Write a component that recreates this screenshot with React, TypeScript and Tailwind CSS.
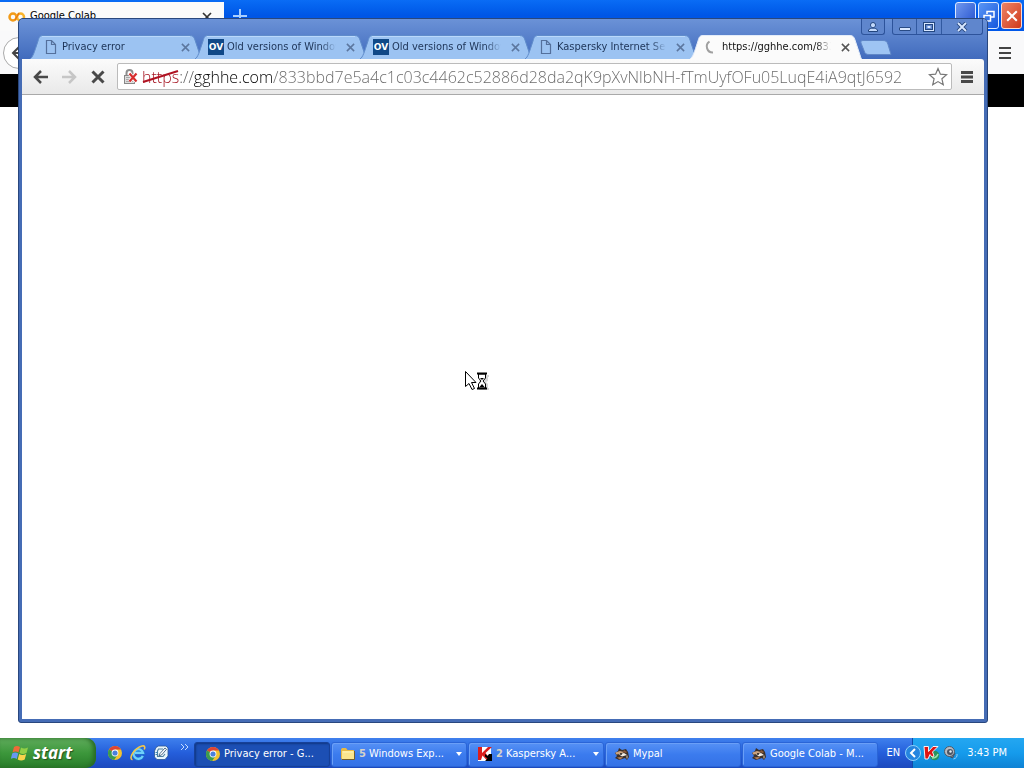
import React from "react";
import type { ReactNode } from "react";

const URL_TEXT =
  "https://gghhe.com/833bbd7e5a4c1c03c4462c52886d28da2qK9pXvNlbNH-fTmUyfOFu05LuqE4iA9qtJ6592";

function ChromeIcon() {
  return (
    <svg viewBox="0 0 16 16" className="size-4 shrink-0" aria-hidden="true">
      <circle cx="8" cy="8" r="7" fill="#f2c230" />
      <path d="M8 8 2 4.4A7 7 0 0 1 14.1 4.6L8 4.6Z" fill="#dd4436" />
      <path d="M8 8 2 4.4A7 7 0 0 0 7.2 15L10.6 9.8Z" fill="#3b9b50" />
      <circle cx="8" cy="8" r="3.4" fill="#fff" />
      <circle cx="8" cy="8" r="2.6" fill="#4a80dc" />
    </svg>
  );
}

function IeIcon() {
  return (
    <svg viewBox="0 0 16 16" className="size-4 shrink-0" aria-hidden="true">
      <path d="M12.8 10.8A4.8 4.8 0 1 1 13 7.8H5" fill="none" stroke="#1e7fd0" strokeWidth="3.4" />
      <path d="M12.8 10.8A4.8 4.8 0 1 1 13 7.8H5" fill="none" stroke="#6fd0fb" strokeWidth="2.2" />
      <path d="M2.5 14.8C-2 13.500 4.5 3 12 1c3-.8 3.200 1.500 2.200 3.500" fill="none" stroke="#f3c64a" strokeWidth="1.6" />
    </svg>
  );
}

function DesktopIcon() {
  return (
    <svg viewBox="0 0 16 16" className="size-4 shrink-0" aria-hidden="true">
      <path d="M3 2.5 5.500 1H13l2 2v8l-3 3.500H4L1.500 12V6Z" fill="#e9f5fb" stroke="#2c5793" strokeWidth=".8" />
      <path d="M10 4H5.500L4.500 6v5.500H10L12 9" fill="none" stroke="#4d7f9f" strokeWidth="1.1" />
      <path d="m6.500 9 5.500-6 1.500 1.300-5 5.700-2.500.7Z" fill="#fff" stroke="#294b6e" strokeWidth=".8" />
      <path d="M2.500 7.500h2M2.500 9.500h2" stroke="#3c87b7" />
    </svg>
  );
}

function FolderIcon() {
  return (
    <svg viewBox="0 0 16 16" className="size-4 shrink-0" aria-hidden="true">
      <path d="M1 3.5 2 2h4l1.5 2H14v10H2L1 12Z" fill="#e9ba45" />
      <path d="M2 5h12v8H2Z" fill="#fbe58d" />
      <path d="M2 13.5h12.5V5" fill="none" stroke="#75602d" />
      <path d="M3 6h10" stroke="#fff6bd" />
    </svg>
  );
}

function KasperskyIcon() {
  return (
    <svg viewBox="0 0 16 16" className="size-4 shrink-0" aria-hidden="true">
      <path d="M1 1h13v14H1Z" fill="#fff" />
      <path d="M1 1h4v6l6-6h4L8.500 7 14 14H9.500L5.500 9.500 4 14H1Z" fill="#dc1d1d" />
      <path d="m8 8 2.500 2L12 8h3v7H8l2.500-2.500L8 10.500Z" fill="#000" />
    </svg>
  );
}

function KasperskyTrayIcon() {
  return (
    <svg viewBox="0 0 18 16" className="h-4 w-[18px] shrink-0" aria-hidden="true">
      <circle cx="11.500" cy="10.500" r="4.800" fill="#279260" />
      <path d="M9 13c3 0 5-1 6-4" fill="none" stroke="#9be3a9" strokeWidth="1.500" />
      <path d="M1 1.500h4.500v5L10 1.500h5L9.500 7l1.500 4-2 1-2-2.500L5 14H2Z" fill="#e01414" stroke="#fff" strokeWidth=".9" />
    </svg>
  );
}

function MypalIcon() {
  return (
    <svg viewBox="0 0 16 16" className="size-4 shrink-0" aria-hidden="true">
      <path d="M1 7 4 5l1-3 3 2 4-1 2 3 1 5-2 3-2-2-3 1-3 1-4-2 2-2Z" fill="#3b302b" />
      <path d="M1.500 6.500 6 5l4 1-3 2-5 .5Z" fill="#caa27e" />
      <path d="m5 8.500 5-1.500 3 2-5 1.500Z" fill="#f2ebe2" />
      <path d="m10 4 3 2-1 1-3-1Z" fill="#8d5a39" />
      <path d="M3 11.500 7 11l2 .5-3 2Z" fill="#b27a51" />
      <path d="M13 9.500v3" stroke="#d9c8b5" />
      <circle cx="7" cy="8" r=".9" fill="#111" />
    </svg>
  );
}

function SpeakerIcon() {
  return (
    <svg viewBox="0 0 16 16" className="size-4 shrink-0" aria-hidden="true">
      <path d="m4 10 5.500 3L12 8" fill="#78808c" stroke="#424d60" />
      <circle cx="6.500" cy="6.500" r="5" fill="#b9bbc1" stroke="#4b5968" />
      <circle cx="7" cy="7" r="3" fill="#4b5565" />
      <circle cx="7.500" cy="6.500" r="1.2" fill="#e8eef4" />
      <path d="M10.500 14c2.500-.5 4-2.500 3.500-5" fill="none" stroke="#9ad3fa" />
    </svg>
  );
}

function WindowsFlag() {
  return (
    <svg viewBox="0 0 18 18" className="size-[18px] shrink-0" aria-hidden="true">
      <path d="M3 3c2-1.5 4-1.3 6 0L7.5 8.5c-2-1.2-4-1.2-6 0Z" fill="#ef6a38" />
      <path d="M10 3.5c2 1.2 4.5 1.2 7 0L15.5 9c-2.5 1.2-4.5 1.2-7 0Z" fill="#92cf47" />
      <path d="M1.2 9.5c2-1.3 4-1.2 6 0L5.8 15c-2-1.3-4-1.3-6 0Z" fill="#6798f2" />
      <path d="M8.2 10c2 1.2 4.5 1.2 7 0l-1.5 5.5c-2.5 1.2-4.5 1.2-7 0Z" fill="#f9d34c" />
    </svg>
  );
}

function PageIcon() {
  return (
    <svg viewBox="0 0 16 16" className="size-4 shrink-0" aria-hidden="true">
      <path d="M3.5 1.5h5l4 4v9h-9Zm5 0v4h4" fill="none" stroke="#54709c" strokeWidth="1.2" />
    </svg>
  );
}

function OvIcon() {
  return (
    <span className="flex size-4 shrink-0 items-center justify-center bg-[#104887] font-['DejaVu_Sans',sans-serif] text-[9px] leading-4 font-bold text-white">
      OV
    </span>
  );
}

function Spinner() {
  return (
    <svg viewBox="0 0 16 16" className="size-4 shrink-0" aria-hidden="true">
      <path d="M10 13.500A6 6 0 0 1 6.5 2.500" fill="none" stroke="#a0a0a0" strokeWidth="2" />
    </svg>
  );
}

function Cross({ className }: { className: string }) {
  return (
    <svg viewBox="0 0 10 10" className={className} aria-hidden="true">
      <path d="m1 1 8 8M9 1 1 9" fill="none" stroke="currentColor" strokeWidth="1.7" />
    </svg>
  );
}

function Tab({ title, icon, active = false }: { title: string; icon: ReactNode; active?: boolean }) {
  return (
    <div className={active ? "relative z-10 -mr-[7px] flex h-6 w-[172px] items-center pr-[11px] pl-[13px] text-[#111]" : "relative -mr-[7px] flex h-6 w-[172px] items-center pr-[11px] pl-[13px] text-[#1d3457]"}>
      <svg viewBox="0 0 172 24" className="absolute inset-0 size-full" preserveAspectRatio="none" aria-hidden="true">
        <path
          d="M0 24C3 22 4 18 8 6C9 2 10 .5 13 .5H160C163 .5 164 2 165 5L170 20C171 23 171 24 172 24Z"
          fill={active ? "#fbfbfb" : "#9cc3f2"}
        />
        <path
          d="M0 24C3 22 4 18 8 6C9 2 10 .5 13 .5H160C163 .5 164 2 165 5L170 20C171 23 171 24 172 24"
          fill="none"
          stroke={active ? "#e3ecf9" : "#5f8ccb"}
        />
        {!active && <path d="M12 1.5H160" stroke="#bad8fb" />}
      </svg>
      <button type="button" className="relative flex min-w-0 flex-1 items-center gap-[3px] text-left">
        {icon}
        <span className="h-4 flex-1 overflow-hidden text-[11px] leading-4 whitespace-nowrap [mask-image:linear-gradient(to_right,black_86%,transparent)]">
          {title}
        </span>
      </button>
      <button type="button" aria-label={"Close " + title} className={active ? "relative ml-[9px] p-px text-[#555]" : "relative ml-[9px] p-px text-[#5c779f]"}>
        <Cross className="size-[9px]" />
      </button>
    </div>
  );
}

function MypalWindow() {
  return (
    <section aria-label="Mypal" className="flex h-full flex-col bg-white">
      <header className="flex h-[31px] items-start justify-between bg-linear-to-b from-[#0a6cf5] via-[#0056e6] to-[#0058ea]">
        <div className="flex">
          <div className="mt-0.5 flex h-[29px] w-56 items-center bg-[#fafafa] pr-3 pl-2 text-[11px] text-black">
            <svg viewBox="0 0 18 12" className="mr-1 w-[18px]" aria-hidden="true">
              <circle cx="5" cy="6" r="3.5" fill="none" stroke="#f29b18" strokeWidth="2.5" />
              <circle cx="12.5" cy="6" r="3.5" fill="none" stroke="#f8b32a" strokeWidth="2.5" />
              <path d="m7 9 4-7" stroke="#e77714" strokeWidth="1.5" />
            </svg>
            <span className="flex-1">Google Colab</span>
            <button type="button" aria-label="Close Google Colab" className="text-[#333]"><Cross className="size-2.5" /></button>
          </div>
          <button type="button" aria-label="New tab" className="flex h-[31px] w-8 items-center justify-center text-[#a9cfff]">
            <svg viewBox="0 0 14 14" className="size-3.5" aria-hidden="true"><path d="M7 0v14M0 7h14" stroke="currentColor" strokeWidth="2" /></svg>
          </button>
        </div>
        <div className="flex gap-[2px] pt-0.5 pr-0.5">
          <button type="button" aria-label="Minimize Mypal" className="h-[27px] w-[21px] rounded-[3px] border border-[#dce9ff] bg-linear-to-br from-[#7198ee] to-[#224bcc]" />
          <button type="button" aria-label="Restore Mypal" className="flex h-[27px] w-[21px] items-center justify-center rounded-[3px] border border-[#dce9ff] bg-linear-to-br from-[#5a95f4] to-[#1557dd]">
            <svg viewBox="0 0 12 12" className="size-3" aria-hidden="true"><path d="M4 4V1.5h7V7H8M1 5.5h6.5V11H1Z" fill="none" stroke="#fff" strokeWidth="1.5" /></svg>
          </button>
          <button type="button" aria-label="Close Mypal" className="flex h-[27px] w-[21px] items-center justify-center rounded-[3px] border border-[#ffd9cf] bg-linear-to-br from-[#ed8264] to-[#cf3717] text-white">
            <Cross className="size-3" />
          </button>
        </div>
      </header>
      <div className="flex h-[43px] items-center justify-between bg-[#f9f9fa] pr-3 pl-[3px]">
        <button type="button" aria-label="Back in Mypal" className="flex size-8 items-center justify-center rounded-full border border-[#aaa] bg-white text-[#444]">
          <svg viewBox="0 0 16 16" className="size-4" aria-hidden="true"><path d="M15 8H2m6-6L2 8l6 6" fill="none" stroke="currentColor" strokeWidth="2" /></svg>
        </button>
        <button type="button" aria-label="Mypal menu" className="text-[#444]">
          <svg viewBox="0 0 14 12" className="h-3 w-3.5" aria-hidden="true"><path d="M1 1h12M1 6h12M1 11h12" stroke="currentColor" strokeWidth="2" /></svg>
        </button>
      </div>
      <div className="h-[33px] bg-black" />
      <main className="flex-1 bg-white" />
    </section>
  );
}

function WindowControls() {
  return (
    <div className="flex h-4 items-start gap-[7px] self-end pr-1">
      <button type="button" aria-label="Switch person" className="flex h-4 w-6 items-center justify-center rounded-b-[3px] border border-t-0 border-[#2d539b] bg-[#5f86cd]">
        <svg viewBox="0 0 12 12" className="size-3" aria-hidden="true"><circle cx="6" cy="4" r="2.5" fill="#c3d9fb" stroke="#21447d" /><path d="M1.500 10.500V9C3 6.500 9 6.500 10.500 9v1.500Z" fill="#c3d9fb" stroke="#21447d" /><circle cx="6" cy="4.500" r="1.700" fill="#c3d9fb" /></svg>
      </button>
      <div className="flex h-4 divide-x divide-[#3159a0] overflow-hidden rounded-b-[3px] border border-t-0 border-[#2d539b] bg-[#5f86cd]">
        <button type="button" aria-label="Minimize" className="flex w-6 items-center justify-center">
          <svg viewBox="0 0 12 10" className="h-2.5 w-3" aria-hidden="true"><rect x=".5" y="5.5" width="11" height="3" rx=".5" fill="#d9e8ff" stroke="#294b84" /></svg>
        </button>
        <button type="button" aria-label="Maximize" className="flex w-[25px] items-center justify-center">
          <svg viewBox="0 0 12 10" className="h-2.5 w-3" aria-hidden="true"><rect x="1.5" y="1.5" width="9" height="7" fill="none" stroke="#234780" strokeWidth="3" /><rect x="1.5" y="1.5" width="9" height="7" fill="none" stroke="#d9e8ff" /><rect x="4.5" y="4" width="3" height="2" fill="#d9e8ff" /></svg>
        </button>
        <button type="button" aria-label="Close" className="flex w-10 items-center justify-center">
          <svg viewBox="0 0 12 10" className="h-2.5 w-3" aria-hidden="true"><path d="m2 1 8 8M10 1 2 9" stroke="#27477c" strokeWidth="3.8" /><path d="m2 1 8 8M10 1 2 9" stroke="#d9e8ff" strokeWidth="1.9" /></svg>
        </button>
      </div>
    </div>
  );
}

function ChromeWindow() {
  return (
    <section aria-label="Chrome" className="absolute top-[18px] right-9 bottom-[15px] left-[18px] flex flex-col rounded-t-[5px] rounded-b-[3px] border border-[#29477e] bg-[#456cb5] px-[3px] pb-[3px]">
      <header className="-mx-[3px] flex h-10 flex-col rounded-t bg-linear-to-b from-[#6b92d7] to-[#416bbd] pl-[11px]">
        <WindowControls />
        <nav aria-label="Tabs" className="flex items-end">
          <Tab title="Privacy error" icon={<PageIcon />} />
          <Tab title="Old versions of Windows" icon={<OvIcon />} />
          <Tab title="Old versions of Windows" icon={<OvIcon />} />
          <Tab title="Kaspersky Internet Security" icon={<PageIcon />} />
          <Tab title="https://gghhe.com/833bbd7e" icon={<Spinner />} active />
          <button type="button" aria-label="New tab" className="mb-1 ml-[5px] h-[15px] w-8">
            <svg viewBox="0 0 32 15" className="size-full" aria-hidden="true"><path d="M3 .5H23c3 0 4 1 5 4l3 10H9c-3 0-4-1-5-4L1 3C.5 1.5 1 .5 3 .5Z" fill="#9ec4f3" stroke="#6087c7" /></svg>
          </button>
        </nav>
      </header>
      <div className="flex h-9 items-center rounded-tr-[3px] border-b border-[#a9a9a9] bg-linear-to-b from-[#fbfbfb] to-[#e9e9e9] pr-[10px] pl-[11px]">
        <button type="button" aria-label="Back" className="text-[#494949]">
          <svg viewBox="0 0 16 16" className="size-4" aria-hidden="true"><path d="M15 8H2m6-6L2 8l6 6" fill="none" stroke="currentColor" strokeWidth="2.5" /></svg>
        </button>
        <button type="button" aria-label="Forward" className="ml-3 text-[#c6c6c6]">
          <svg viewBox="0 0 16 16" className="size-4" aria-hidden="true"><path d="M1 8h13M8 2l6 6-6 6" fill="none" stroke="currentColor" strokeWidth="2.5" /></svg>
        </button>
        <button type="button" aria-label="Stop" className="ml-[13px] flex size-4 items-center justify-center text-[#494949]">
          <svg viewBox="0 0 14 14" className="size-3.5" aria-hidden="true"><path d="m1.5 1.5 11 11m0-11-11 11" stroke="currentColor" strokeWidth="3" /></svg>
        </button>
        <div className="ml-[11px] flex h-[27px] min-w-0 flex-1 items-center rounded-xs border border-[#bbb] bg-white pr-[3px] pl-1">
          <svg viewBox="0 0 18 18" className="size-[18px] shrink-0" aria-hidden="true">
            <path d="M4.500 8V5a3 3 0 0 1 6 0v3" fill="none" stroke="#8e8e8e" strokeWidth="2" />
            <rect x="2.5" y="7.5" width="10" height="8" fill="#ddd" stroke="#888" />
            <path d="M4 9.500h7M4 11.500h7M4 13.500h7" stroke="#aaa" />
            <path d="m7.500 5.500 7 8m0-8-7 8" stroke="#fff" strokeWidth="3.5" /><path d="m7.500 5.500 7 8m0-8-7 8" stroke="#d72d2d" strokeWidth="2.200" />
          </svg>
          <div className="relative ml-0.5 min-w-0 flex-1">
            <input
              aria-label="Address"
              type="text"
              defaultValue={URL_TEXT}
              spellCheck={false}
              className="block h-6 w-full bg-[linear-gradient(to_right,#a3101d_0,#a3101d_37px,#555_37px,#555_52px,#000_52px,#000_131px,#666_131px)] bg-clip-text font-['Open_Sans','Noto_Sans',sans-serif] text-base font-light text-transparent caret-black outline-none"
            />
            <svg viewBox="0 0 37 14" className="pointer-events-none absolute top-[5px] left-0 h-3.5 w-[37px]" aria-hidden="true"><path d="M1 12 36 1" stroke="#b01322" strokeWidth="2" /></svg>
          </div>
          <button type="button" aria-label="Bookmark this page">
            <svg viewBox="0 0 20 20" className="size-5" aria-hidden="true"><path d="m10 1.5 2.4 5.7 6.2.5-4.7 4.1 1.4 6-5.3-3.2-5.3 3.2 1.4-6-4.7-4.1 6.2-.5Z" fill="#fff" stroke="#777" strokeWidth="1.2" /></svg>
          </button>
        </div>
        <button type="button" aria-label="Chrome menu" className="ml-2 text-[#494949]">
          <svg viewBox="0 0 14 14" className="size-3.5" aria-hidden="true"><path d="M1 2.5h12M1 7h12M1 11.5h12" stroke="currentColor" strokeWidth="3" /></svg>
        </button>
      </div>
      <main className="flex-1 bg-white" />
    </section>
  );
}

function TaskButton({ icon, title, count, active = false }: { icon: ReactNode; title: string; count?: string; active?: boolean }) {
  return (
    <button
      type="button"
      className={
        active
          ? "flex h-[25px] max-w-[136px] min-w-0 flex-1 items-center gap-[3px] rounded-[3px] border border-[#164098] bg-[#1c4fb4] px-2.5 text-left text-white shadow-[inset_1px_1px_2px_#103783]"
          : "flex h-[25px] max-w-[136px] min-w-0 flex-1 items-center gap-[3px] rounded-[3px] border border-[#2a65d7] bg-linear-to-b from-[#5691f5] via-[#3b7bee] to-[#3572e6] px-2 text-left text-white shadow-[inset_1px_1px_0_#6a9ff7]"
      }
    >
      {icon}
      {count && <b className="text-[#d7d2c7]">{count}</b>}
      <span className="flex-1 whitespace-nowrap">{title}</span>
      {count && <svg viewBox="0 0 6 4" className="-mr-1 h-1 w-1.5 shrink-0" aria-hidden="true"><path d="M0 0h6L3 4Z" fill="#fff" /></svg>}
    </button>
  );
}

function Taskbar() {
  return (
    <footer className="flex h-[30px] shrink-0 items-stretch bg-linear-to-b from-[#3f80ed] via-[#245edb] to-[#1c49bd] text-[11px] text-white">
      <button type="button" className="flex w-24 items-center gap-1 rounded-r-[10px] bg-linear-to-b from-[#5fac5c] via-[#3c973b] to-[#287c29] pl-[11px] font-['Open_Sans',sans-serif] text-[17px] leading-5 font-bold text-white italic shadow-[inset_-3px_0_4px_#286a25] [text-shadow:1px_1px_1px_#24521f]">
        <WindowsFlag />
        start
      </button>
      <div className="ml-[11px] flex w-[87px] items-center gap-[7px]">
        <button type="button" aria-label="Google Chrome"><ChromeIcon /></button>
        <button type="button" aria-label="Internet Explorer"><IeIcon /></button>
        <button type="button" aria-label="Show Desktop"><DesktopIcon /></button>
        <button type="button" aria-label="More shortcuts" className="mb-3 ml-1">
          <svg viewBox="0 0 9 6" className="h-1.5 w-[9px]" aria-hidden="true"><path d="m1 0 3 3-3 3M5 0l3 3-3 3" fill="none" stroke="#c5ddff" /></svg>
        </button>
      </div>
      <nav aria-label="Open windows" className="flex min-w-0 flex-1 items-center gap-px pt-0.5">
        <TaskButton icon={<ChromeIcon />} title="Privacy error - G..." active />
        <TaskButton icon={<FolderIcon />} count="5" title="Windows Exp..." />
        <TaskButton icon={<KasperskyIcon />} count="2" title="Kaspersky A..." />
        <TaskButton icon={<MypalIcon />} title="Mypal" />
        <TaskButton icon={<MypalIcon />} title="Google Colab - M..." />
      </nav>
      <button type="button" aria-label="Input language" className="pr-3 pl-2">EN</button>
      <div className="flex items-center border-l border-[#124ba8] bg-linear-to-b from-[#24a7f1] via-[#159bec] to-[#0f82d4] pr-[17px]">
        <button type="button" aria-label="Show hidden icons" className="-ml-2 flex size-4 items-center justify-center rounded-full border border-[#8fd0fa] bg-[#2585df]">
          <svg viewBox="0 0 8 10" className="h-2.5 w-2" aria-hidden="true"><path d="M6 1 2 5l4 4" fill="none" stroke="#fff" strokeWidth="2" /></svg>
        </button>
        <span className="ml-0.5 flex gap-0.5"><KasperskyTrayIcon /><SpeakerIcon /></span>
        <time className="ml-2 whitespace-nowrap">3:43 PM</time>
      </div>
    </footer>
  );
}

export default function App() {
  return (
    <div className="flex h-screen flex-col overflow-hidden bg-white font-['DejaVu_Sans_Condensed','DejaVu_Sans',sans-serif]">
      <div className="relative min-h-0 flex-1">
        <MypalWindow />
        <ChromeWindow />
        <svg viewBox="0 0 26 22" className="pointer-events-none absolute top-[370px] left-[464px] h-[22px] w-[26px]" aria-hidden="true">
          <path d="M15 5h10v2h-1v4l-2 1 2 2v4h1v2H15Z" fill="#bbb" opacity=".6" />
          <path d="M1.5 1.5v15l3.5-3 3 6 2.5-1-3-6h4.5Z" fill="#fff" stroke="#000" />
          <path d="M14.500 4v4l2.500 3-2.500 3v4h7v-4L19 11l2.500-3V4Z" fill="#fff" stroke="#000" />
          <path d="M13 3.500h10M13 18.500h10" stroke="#000" strokeWidth="2" />
          <path d="M16 8h4l-2 2Z" fill="#000" />
          <path d="M15.500 17 18 14l2.500 3Z" fill="#000" />
        </svg>
      </div>
      <Taskbar />
    </div>
  );
}
